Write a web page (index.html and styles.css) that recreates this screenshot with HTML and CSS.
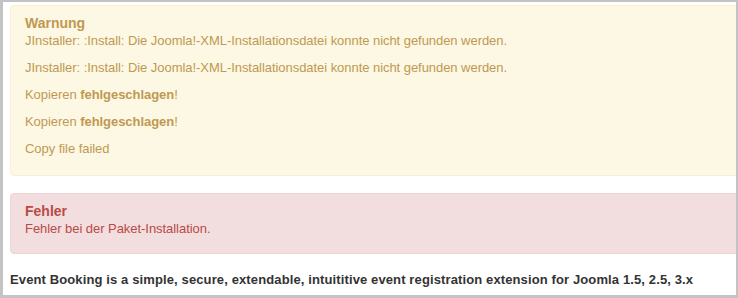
FILE: index.html
```html
<!DOCTYPE html>
<html lang="de">
<head>
<meta charset="utf-8">
<title>Installation</title>
<link rel="stylesheet" href="styles.css">
</head>
<body>
<div class="frame">
  <div class="content">
    <div class="alert alert-warning">
      <h4 class="alert-heading">Warnung</h4>
      <p>JInstaller: :Install: Die Joomla!-XML-Installationsdatei konnte nicht gefunden werden.</p>
      <p>JInstaller: :Install: Die Joomla!-XML-Installationsdatei konnte nicht gefunden werden.</p>
      <p>Kopieren <strong>fehlgeschlagen</strong>!</p>
      <p>Kopieren <strong>fehlgeschlagen</strong>!</p>
      <p>Copy file failed</p>
    </div>
    <div class="alert alert-error">
      <h4 class="alert-heading">Fehler</h4>
      <p>Fehler bei der Paket-Installation.</p>
    </div>
    <p class="intro">Event Booking is a simple, secure, extendable, intuititive event registration extension for Joomla 1.5, 2.5, 3.x</p>
  </div>
</div>
</body>
</html>
```

FILE: styles.css
```css
html, body {
  margin: 0;
  padding: 0;
  background: #ffffff;
}
body {
  font-family: "Liberation Sans", Arial, sans-serif;
  font-size: 13px;
  line-height: 18px;
  color: #333333;
  letter-spacing: -0.05px;
}
.frame {
  box-sizing: border-box;
  width: 738px;
  height: 298px;
  border-style: solid;
  border-color: #c3c3c3;
  border-width: 2px 2px 3px 3px;
  overflow: hidden;
}
.content {
  width: 760px;
  padding: 3px 0 0 7px;
}
.alert {
  padding: 8px 35px 8px 14px;
  margin-bottom: 17px;
  border: 1px solid;
  border-radius: 4px;
}
.alert-warning {
  background: #fcf8e3;
  border-color: #fbeed5;
  color: #c09853;
}
.alert-error {
  background: #f2dede;
  border-color: #eed3d7;
  color: #b94a48;
}
.alert-heading {
  margin: 0;
  font-size: 14px;
  line-height: 18px;
  font-weight: bold;
  color: inherit;
  letter-spacing: 0;
}
.alert p {
  margin: 0 0 9px;
}
.alert-error p {
  margin-bottom: 7px;
}
.intro {
  margin: 0;
  font-weight: bold;
  color: #333333;
  letter-spacing: 0.12px;
}
```
